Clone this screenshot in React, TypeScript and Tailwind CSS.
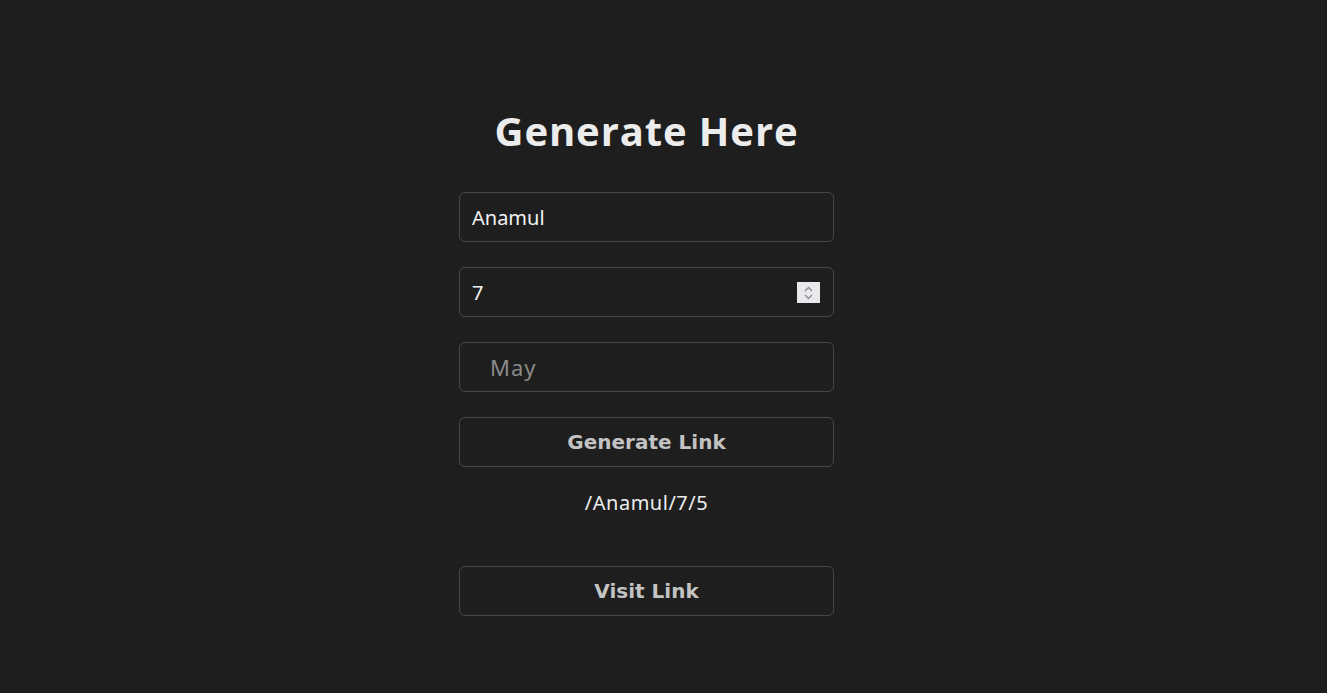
// Link generator page

import { useState } from 'react';

export default function App() {
  const [name, setName] = useState('Anamul');
  const [day, setDay] = useState('7');
  const [month, setMonth] = useState('');
  const [link] = useState('/Anamul/7/5');

  return (
    <div className="min-h-[693px] w-full bg-[#1e1e1e] pr-[34px] font-['Noto_Sans',sans-serif]">
      <div className="flex flex-col items-center pt-[107px]">
        <h1 className="font-['Open_Sans',sans-serif] text-[40px] leading-[48px] font-bold tracking-[0.9px] text-[#ececec]">
          Generate Here
        </h1>

        <input
          type="text"
          value={name}
          onChange={(e) => setName(e.target.value)}
          className="mt-[37px] h-[50px] w-[375px] rounded-md border border-[#474747] bg-transparent pl-[12px] text-[20px] text-[#f2f2f2] outline-none"
        />

        <div className="relative mt-[25px]">
          <input
            type="text"
            value={day}
            onChange={(e) => setDay(e.target.value)}
            className="h-[50px] w-[375px] rounded-md border border-[#474747] bg-transparent pl-[12px] text-[20px] text-[#f2f2f2] outline-none"
          />
          <span className="absolute top-[15px] right-[14px] flex h-[21px] w-[23px] flex-col items-center justify-center bg-[#e9e8ed]">
            <svg width="9" height="14" viewBox="0 0 9 14" fill="none">
              <path d="M1 5 L4.5 1.5 L8 5" stroke="#8b8a90" strokeWidth="1.3" />
              <path d="M1 9 L4.5 12.5 L8 9" stroke="#8b8a90" strokeWidth="1.3" />
            </svg>
          </span>
        </div>

        <input
          type="text"
          value={month}
          placeholder="May"
          onChange={(e) => setMonth(e.target.value)}
          className="mt-[25px] h-[50px] w-[375px] rounded-md border border-[#474747] bg-transparent pl-[30px] text-[22px] tracking-[1px] text-[#f2f2f2] outline-none placeholder:text-[#8a8a8a]"
        />

        <button className="mt-[25px] h-[50px] w-[375px] rounded-md border border-[#474747] bg-transparent font-['DejaVu_Sans',sans-serif] text-[20px] font-bold text-[#c3c3c3]">
          Generate Link
        </button>

        <p className="mt-[24px] text-[20px] leading-[24px] tracking-[0.5px] text-[#ededed]">{link}</p>

        <button className="mt-[51px] h-[50px] w-[375px] rounded-md border border-[#474747] bg-transparent font-['DejaVu_Sans',sans-serif] text-[20px] font-bold text-[#c3c3c3]">
          Visit Link
        </button>
      </div>
    </div>
  );
}
